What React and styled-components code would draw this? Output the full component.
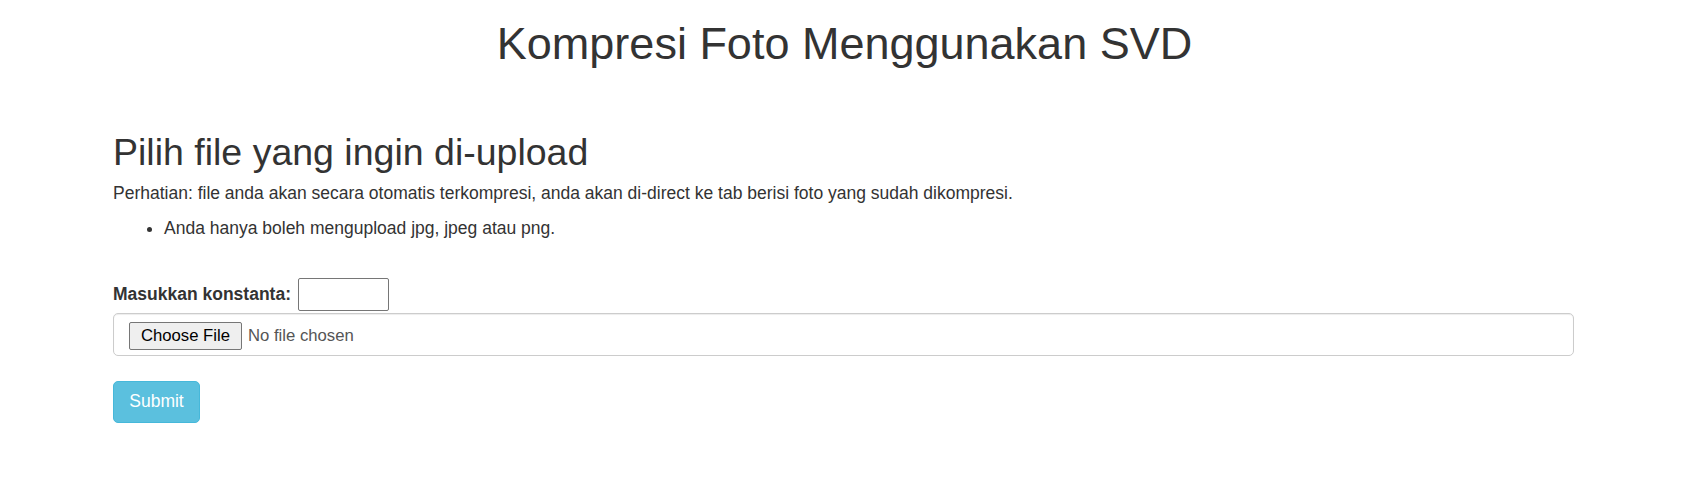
import React from 'react'
import styled, { createGlobalStyle } from 'styled-components'

const GlobalStyle = createGlobalStyle`
  html, body {
    margin: 0;
    padding: 0;
    background: #fff;
  }
  body {
    font-family: "Liberation Sans", Arial, Helvetica, sans-serif;
    font-size: 17.5px;
    line-height: 1.42857;
    color: #333;
  }
  * {
    box-sizing: border-box;
  }
`;

const Page = styled.div`
  width: 100%;
  padding-bottom: 40px;
`;

const MainTitle = styled.h1`
  font-size: 45px;
  font-weight: 500;
  line-height: 1.1;
  text-align: center;
  margin: 19px 0 0;
  padding-right: 10px;
`;

const Container = styled.div`
  padding: 0 125px 0 113px;
`;

const SubTitle = styled.h2`
  font-size: 37.5px;
  font-weight: 500;
  line-height: 1.1;
  margin: 63px 0 8px;
`;

const Note = styled.p`
  margin: 0 0 10px;
`;

const Rules = styled.ul`
  margin: 0;
  padding-left: 51px;
`;

const UploadForm = styled.form`
  margin-top: 37px;
  display: flex;
  flex-direction: column;
`;

const ConstRow = styled.div`
  display: flex;
  align-items: center;
  height: 33px;
`;

const Label = styled.label`
  font-weight: 700;
  margin-right: 7px;
`;

const NumberInput = styled.input`
  width: 91px;
  height: 33px;
  border: 1px solid #767676;
  border-radius: 2px;
  padding: 1px 2px;
  font-size: 16px;
  font-family: inherit;
  background: #fff;
`;

const FileBox = styled.div`
  margin-top: 2px;
  height: 43px;
  border: 1px solid #ccc;
  border-radius: 5px;
  padding: 8px 15px 0;
  display: flex;
  align-items: flex-start;
  box-shadow: inset 0 1px 1px rgba(0, 0, 0, 0.075);
`;

const ChooseButton = styled.span`
  display: inline-flex;
  align-items: center;
  justify-content: center;
  width: 113px;
  height: 28px;
  background: #efefef;
  border: 1px solid #767676;
  border-radius: 2px;
  font-size: 16.7px;
  color: #000;
`;

const FileStatus = styled.span`
  margin-left: 6px;
  line-height: 28px;
  font-size: 16.7px;
  color: #555;
`;

const SubmitButton = styled.button`
  margin-top: 25px;
  align-self: flex-start;
  width: 87px;
  height: 42px;
  background: #5bc0de;
  border: 1px solid #46b8da;
  border-radius: 5px;
  color: #fff;
  font-family: inherit;
  font-size: 17.5px;
  padding: 0;
  cursor: pointer;
`;

export default function App() {
  return (
    <Page>
      <GlobalStyle />
      <MainTitle>Kompresi Foto Menggunakan SVD</MainTitle>
      <Container>
        <SubTitle>Pilih file yang ingin di-upload</SubTitle>
        <Note>
          Perhatian: file anda akan secara otomatis terkompresi, anda akan di-direct ke tab berisi foto yang sudah dikompresi.
        </Note>
        <Rules>
          <li>Anda hanya boleh mengupload jpg, jpeg atau png.</li>
        </Rules>
        <UploadForm onSubmit={(e) => e.preventDefault()}>
          <ConstRow>
            <Label htmlFor="k">Masukkan konstanta:</Label>
            <NumberInput id="k" type="text" />
          </ConstRow>
          <FileBox>
            <ChooseButton>Choose File</ChooseButton>
            <FileStatus>No file chosen</FileStatus>
          </FileBox>
          <SubmitButton type="submit">Submit</SubmitButton>
        </UploadForm>
      </Container>
    </Page>
  )
}
